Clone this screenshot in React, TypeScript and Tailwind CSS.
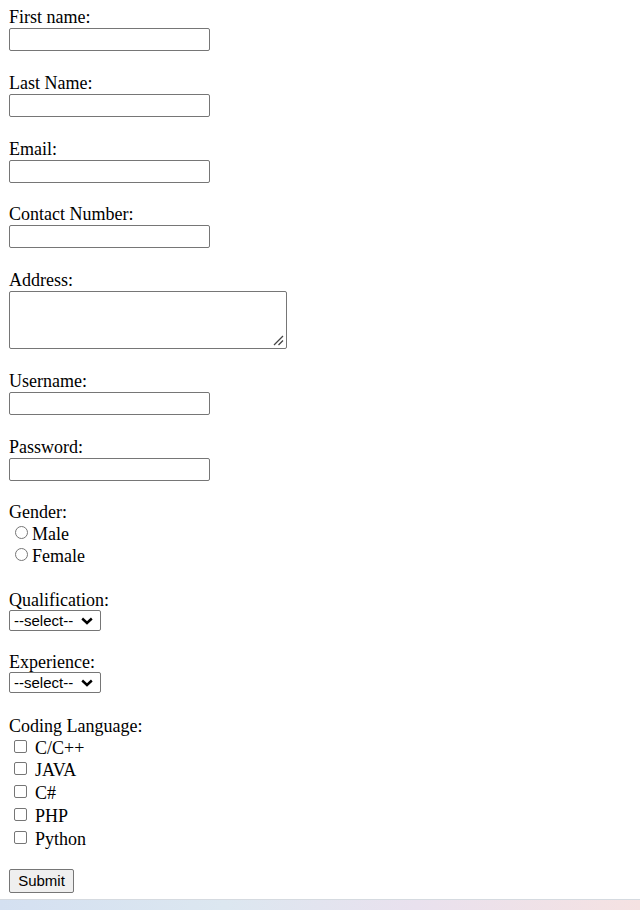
import React from "react";

const textFields = [
  { label: "First name:", type: "text" },
  { label: "Last Name:", type: "text" },
  { label: "Email:", type: "email" },
  { label: "Contact Number:", type: "text" },
];

const accountFields = [
  { label: "Username:", type: "text" },
  { label: "Password:", type: "password" },
];

const languages = ["C/C++", "JAVA", "C#", "PHP", "Python"];

function Field({ label, type }: { label: string; type: string }) {
  return (
    <div className="mb-[22.75px]">
      <div className="h-[20px] leading-[18px]">{label}</div>
      <input
        type={type}
        className="block h-[23px] w-[201px] rounded-[2px] border border-[#767676] bg-white outline-none"
      />
    </div>
  );
}

function SelectBox() {
  return (
    <div className="relative h-[21px] w-[92px]">
      <select className="block h-[21px] w-[92px] appearance-none rounded-[2px] border border-[#767676] bg-white pl-[4px] font-['Liberation_Sans',Arial,sans-serif] text-[15px] leading-[19px] text-black outline-none">
        <option>--select--</option>
      </select>
      <svg
        className="pointer-events-none absolute right-[8px] top-[7px]"
        width="12"
        height="8"
        viewBox="0 0 12 8"
      >
        <path d="M1.2 1.5 L6 6 L10.8 1.5" fill="none" stroke="#000" strokeWidth="2.4" />
      </svg>
    </div>
  );
}

export default function App() {
  return (
    <div className="flex min-h-[910px] flex-col bg-white font-['Liberation_Serif','Times_New_Roman',serif] text-[18px] text-black">
      <form className="flex-1 pl-[9px] pt-[8px]">
        {textFields.map((f) => (
          <Field key={f.label} label={f.label} type={f.type} />
        ))}

        <div className="mb-[22.75px]">
          <div className="h-[20px] leading-[18px]">Address:</div>
          <div className="relative h-[58px] w-[278px]">
            <textarea className="block h-[58px] w-[278px] resize-none rounded-[2px] border border-[#767676] bg-white outline-none" />
            <svg
              className="pointer-events-none absolute bottom-[3px] right-[3px]"
              width="12"
              height="12"
              viewBox="0 0 12 12"
            >
              <path d="M2 11 L11 2 M6.5 11 L11 6.5" stroke="#444" strokeWidth="1.3" />
            </svg>
          </div>
        </div>

        {accountFields.map((f) => (
          <Field key={f.label} label={f.label} type={f.type} />
        ))}

        <div className="mb-[24px]">
          <div className="h-[20px] leading-[18px]">Gender:</div>
          {["Male", "Female"].map((g) => (
            <label key={g} className="flex h-[22px] items-center leading-[22px]">
              <span className="mb-[4px] ml-[6px] mr-[4px] h-[13px] w-[13px] rounded-full border border-[#767676] bg-white" />
              {g}
            </label>
          ))}
        </div>

        <div className="mb-[22px]">
          <div className="h-[19px] leading-[19px]">Qualification:</div>
          <SelectBox />
        </div>

        <div className="mb-[24px]">
          <div className="h-[19px] leading-[19px]">Experience:</div>
          <SelectBox />
        </div>

        <div className="mb-[17px]">
          <div className="h-[19px] leading-[19px]">Coding Language:</div>
          {languages.map((l) => (
            <label key={l} className="flex h-[22.75px] items-center leading-[22px]">
              <span className="mb-[3px] ml-[5px] mr-[8px] h-[13px] w-[13px] rounded-[2px] border border-[#767676] bg-white" />
              {l}
            </label>
          ))}
        </div>

        <button
          type="button"
          className="h-[24px] w-[65px] rounded-[2px] border border-[#767676] bg-[#efefef] font-['Liberation_Sans',Arial,sans-serif] text-[15px] leading-[22px] text-black"
        >
          Submit
        </button>
      </form>

      <div className="h-[11px] border-t border-[#d5dae0] bg-[linear-gradient(90deg,#d4e0f1,#dce7f0_35%,#e9e1ee_65%,#f5e2e2)]" />
    </div>
  );
}
